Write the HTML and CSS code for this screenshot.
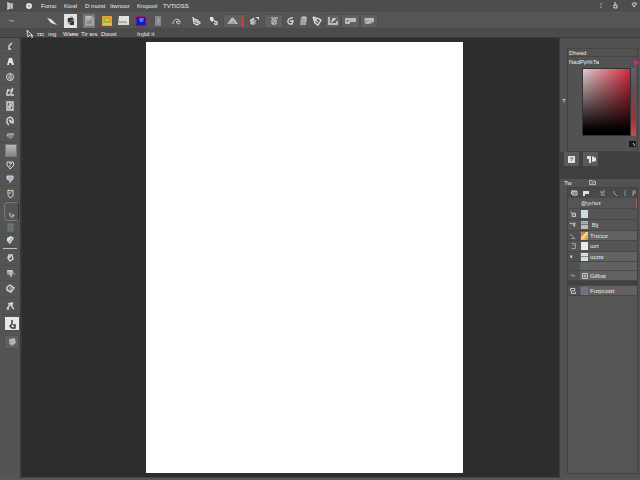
FILE: index.html
```html
<!DOCTYPE html>
<html lang="en">
<head>
<meta charset="utf-8">
<title>Paint</title>
<link rel="stylesheet" href="styles.css">
</head>
<body>
<div class="app">
  <header>
    <nav class="menu" aria-label="Menu">
      <svg class="ico" viewBox="0 0 12 12"><path class="soft" d="M3 3h6v6H3z"/><path d="M3 3h2v6H3M8 4v4"/></svg>
      <svg class="ico" viewBox="0 0 12 12"><circle class="fill" cx="6" cy="6" r="3"/><path class="shade" d="M5 5l2 2"/></svg>
      <button>Fomo</button><button>Kiosl</button><button>Dːmoist</button><button>Itwnuor</button><button>Kropoxl</button><button>TVTIOSS</button>
      <span class="window">
        <svg class="ico dim" viewBox="0 0 12 12"><path d="M5 4h2M5 7h2"/></svg>
        <svg class="ico" viewBox="0 0 12 12"><path d="M5 2v3H4v3h3V5H5"/></svg>
        <svg class="ico" viewBox="0 0 12 12"><path d="M4 3l2 4 3-4M5 3h3"/></svg>
      </span>
    </nav>
    <div class="toolbar">
      <button aria-label="Collapse"><svg class="ico dim" viewBox="0 0 12 12"><path d="M4 5l2 1h3"/></svg></button>
      <button aria-label="Undo"><svg class="ico" viewBox="0 0 12 12"><path class="fill" d="M1 3l4 1 6 6-6-2z"/></svg></button>
      <button class="light" aria-label="Brush"><svg class="ico" viewBox="0 0 12 12"><path class="fill" d="M0 0h12v12H0z"/><path class="soft" d="M2 4l5-3 3 4-3 5-4-1z"/><path class="ink thick" d="M8 4H4v2l4 1v2H5"/></svg></button>
      <button class="grey" aria-label="Document"><svg class="ico" viewBox="0 0 12 12"><path class="soft" d="M2 1h7l2 2v8H2z"/><path d="M3 2h5M4 5h3"/><path class="shade" d="M4 6h5M4 8h5"/></svg></button>
      <button aria-label="Picture"><svg class="ico" viewBox="0 0 12 12"><path fill="#ef9b32" stroke="none" d="M1 1h10v10H1z"/><path fill="#8dbb3a" stroke="none" d="M3 3h6v5H3z"/><path stroke="#ffe264" d="M2 9h8M4 5h4"/></svg></button>
      <button aria-label="Open"><svg class="ico" viewBox="0 0 12 12"><path class="fill" d="M1 1h10v9H0z"/><path stroke="#d8d1a0" d="M1 9h10"/><path class="shade" d="M1 7h8"/></svg></button>
      <button aria-label="Color"><svg class="ico" viewBox="0 0 12 12"><path fill="#1818b8" stroke="#892b74" d="M1 1h10v10H1z"/><path fill="#3c7cff" stroke="none" d="M4 3h5l-1 4H5z"/><path stroke="#e52020" d="M1 1h10"/></svg></button>
      <button aria-label="Page"><svg class="ico dim" viewBox="0 0 12 12"><path class="soft" d="M3 1h6v10H3z"/><path d="M5 4h2v3H5"/></svg></button>
      <button aria-label="Rotate"><svg class="ico" viewBox="0 0 12 12"><path d="M2 9c0-4 4-6 6-4s1 4-1 4l-2-2 3-1"/></svg></button>
      <button aria-label="Fill"><svg class="ico" viewBox="0 0 12 12"><path class="bold" d="M3 2l1 6 3 2 3-2-3-3-4-1M5 6l3 2"/></svg></button>
      <button aria-label="Link"><svg class="ico" viewBox="0 0 12 12"><path class="fill" d="M2 2h3l1 3-2 2-2-2z"/><path class="bold" d="M6 6l3 1v3M6 8l2 2"/></svg></button>
      <button class="raised marked" aria-label="Ruler"><svg class="ico" viewBox="0 0 12 12"><path class="soft" d="M1 9l4-6 2 1 4 5z"/><path d="M1 9l4-6 2 1 3 5M4 7l2-2"/></svg></button>
      <button aria-label="Snap"><svg class="ico" viewBox="0 0 12 12"><circle class="soft" cx="5" cy="7" r="3"/><path class="fill" d="M7 2h4v3L9 3z"/><path class="bold" d="M2 6l4-3M3 9l2-2"/></svg></button>
      <button class="raised" aria-label="Grid"><svg class="ico" viewBox="0 0 12 12"><path d="M3 3h5M4 5h4v4H4zM5 8l2-2M9 2v2"/></svg></button>
      <button aria-label="Curve"><svg class="ico" viewBox="0 0 12 12"><path class="bold" d="M9 3C4 2 2 8 6 9h2l1-3H6"/></svg></button>
      <button aria-label="Mirror"><svg class="ico" viewBox="0 0 12 12"><path class="soft" d="M4 2h5v8H3z"/><path d="M5 2h4v5"/></svg></button>
      <button aria-label="Shape"><svg class="ico" viewBox="0 0 12 12"><path class="bold" d="M2 2l2 6 3 2 3-5-4-2-2 2 3 2M2 2l3 1"/></svg></button>
      <button class="raised" aria-label="Crop"><svg class="ico" viewBox="0 0 12 12"><path class="bold" d="M2 2v7h8V6M4 7l4-3H5"/></svg></button>
      <button class="raised" aria-label="Align"><svg class="ico" viewBox="0 0 12 12"><path class="bold" d="M1 3v5h3V6h7M1 4h10"/></svg></button>
      <button class="raised" aria-label="Layer"><svg class="ico" viewBox="0 0 12 12"><path class="soft" d="M1 4l3-1h7v4L7 9H2z"/><path d="M2 4h8v2M4 8l4-2"/></svg></button>
    </div>
    <div class="options">
      <svg class="ico" viewBox="0 0 12 12"><path d="M3 2l1 7 2-2 3 1zM8 7v3"/></svg>
      <button>ɪɪc</button><button>ıııg</button><button>Waʀɐ</button><button>Tir ɐıs</button><button>Dɑost</button><button>Iɱlɑl it</button>
    </div>
  </header>
  <main>
    <aside class="tools" aria-label="Tools">
      <button aria-label="Pen"><svg class="ico" viewBox="0 0 12 12"><path class="bold" d="M8 3L5 6v3h2"/></svg></button>
      <button aria-label="Text"><svg class="ico" viewBox="0 0 12 12"><path class="fill" d="M3 9l2-7h3l2 7H8L7 7H5v2z"/></svg></button>
      <button aria-label="Stamp"><svg class="ico" viewBox="0 0 12 12"><circle cx="6" cy="6" r="3.5"/><path d="M5 4h2v5M5 5v3"/></svg></button>
      <button aria-label="Select"><svg class="ico" viewBox="0 0 12 12"><path class="bold" d="M3 4h2L3 6v3h3M9 2L7 5h2M7 6v3h3"/></svg></button>
      <button aria-label="Frame"><svg class="ico" viewBox="0 0 12 12"><path class="bold" d="M3 2h6v8H3zM5 4h2v2H5v2h2"/></svg></button>
      <button aria-label="Zoom"><svg class="ico" viewBox="0 0 12 12"><path class="bold" d="M3 4c4-4 7 0 6 4l-2-1M3 4v4l2 2M5 5l2 1-1 2"/></svg></button>
      <button aria-label="Lasso"><svg class="ico dim" viewBox="0 0 12 12"><path class="soft" d="M3 4h7v2L7 9 3 7z"/><path class="bold" d="M10 4H4L3 6"/></svg></button>
      <button class="swatch" aria-label="Gradient"></button>
      <button aria-label="Bucket"><svg class="ico" viewBox="0 0 12 12"><path d="M3 3h6l1 3-4 4-3-4zM5 4l2 1 1-1M6 6v2"/></svg></button>
      <button aria-label="Blur"><svg class="ico" viewBox="0 0 12 12"><path fill="#aaaace" d="M3 3h6v3L7 8 3 6zM6 7v3"/></svg></button>
      <button aria-label="Shape"><svg class="ico" viewBox="0 0 12 12"><path d="M4 2l3 1 2-1v6l-3 2-2-3zM6 4v2"/></svg></button>
      <button class="chosen" aria-label="Brush"><svg class="ico" viewBox="0 0 12 12"><path d="M4 5c-1 5 4 5 4 2H6"/></svg></button>
      <button aria-label="Pattern"><svg class="ico dim" viewBox="0 0 12 12"><path fill="#65757a" stroke="#809397" d="M4 3h5v7H4zM7 3v6"/></svg></button>
      <button aria-label="Eraser"><svg class="ico" viewBox="0 0 12 12"><path class="fill" d="M3 4l4-2 3 2-4 6-3-3z"/><path class="shade" d="M5 8l3-4"/></svg></button>
      <hr>
      <button aria-label="Dodge"><svg class="ico" viewBox="0 0 12 12"><path class="bold" d="M5 3h3l1 4-3 2-2-3zM6 4v2"/></svg></button>
      <button aria-label="Clone"><svg class="ico" viewBox="0 0 12 12"><path class="soft" d="M3 3h5l2 3-3 3-4-2z"/><path d="M3 4h6M7 3v7M10 7h1"/></svg></button>
      <button aria-label="Smudge"><svg class="ico" viewBox="0 0 12 12"><path class="bold" d="M3 4l3-2 4 3-3 4-4-2z"/><path fill="#a78078" stroke="none" d="M5 4h3v3H5z"/></svg></button>
      <button aria-label="Move"><svg class="ico" viewBox="0 0 12 12"><path class="bold" d="M3 9l2-3 4-3M4 4l4-1v4l2 2M3 9h2"/></svg></button>
      <button class="ground" aria-label="Foreground color"><svg class="ico" viewBox="0 0 12 12"><path class="ink bold" d="M6 2v4L4 8l2 2h3V7H7"/></svg></button>
      <button class="raised" aria-label="Mask"><svg class="ico" viewBox="0 0 12 12"><path class="soft" d="M3 3l6-1 1 5-4 3-3-2z"/><path d="M4 5l4-2M5 8l4-3"/></svg></button>
    </aside>
    <section class="canvas"><div class="page"></div></section>
    <aside class="side">
      <div class="grip">?</div>
      <section class="color">
        <h2>Dhesd</h2>
        <div class="picker">
          <h3>NadPp%Ta</h3>
          <div class="field"><div class="shades"></div><div class="hue"></div></div>
          <svg class="ico" viewBox="0 0 12 12"><path fill="#191919" stroke="none" d="M4 3h7v6H4z"/><path d="M8 5l2 3"/></svg>
          <span class="dot"></span>
        </div>
      </section>
      <div class="modes">
        <button aria-label="Swatches"><svg class="ico" viewBox="0 0 12 12"><path class="fill" d="M2 3h7v7H2z"/><path class="shade" d="M4 5h3l-2 3"/></svg></button>
        <button aria-label="History"><svg class="ico" viewBox="0 0 12 12"><path class="fill" d="M2 3h4v7H4V6H2zM7 3l4 2v3L7 9z"/></svg></button>
      </div>
      <div class="tabs"><button>Tw</button><button aria-label="Folders"><svg class="ico" viewBox="0 0 12 12"><path d="M2 3h3l1 1h3v4H2zM4 6h3"/></svg></button></div>
      <section class="layers">
        <div class="actions">
          <button aria-label="Visible"><svg class="ico" viewBox="0 0 12 12"><path d="M3 4h6v4H5L3 6l2-2v4M7 4v3"/></svg></button>
          <button aria-label="Folder"><svg class="ico" viewBox="0 0 12 12"><path class="fill" d="M3 4h6v3H5v2H3z"/></svg></button>
          <button aria-label="Edit"><svg class="ico dim" viewBox="0 0 12 12"><path d="M4 5h3L5 8h4M8 3v3"/></svg></button>
          <button aria-label="Back"><svg class="ico dim" viewBox="0 0 12 12"><path d="M4 4v2l3 3"/></svg></button>
          <button aria-label="Down"><svg class="ico" viewBox="0 0 12 12"><path stroke="#6ba0a3" d="M6 3v6"/></svg></button>
          <button aria-label="Corner"><svg class="ico dim" viewBox="0 0 12 12"><path d="M8 4H5v5M5 6h3"/></svg></button>
        </div>
        <ul>
          <li class="head"><span></span><b>@yı/ıoɪ</b></li>
          <li><svg class="ico" viewBox="0 0 12 12"><path d="M3 3l2 2v4h4V5H5M6 7h2"/></svg><i class="thumb sky"></i><b></b></li>
          <li><svg class="ico" viewBox="0 0 12 12"><path d="M2 4h3l3 4V4M6 4h3"/></svg><i class="thumb lines"></i><b>&nbsp;Bij</b></li>
          <li class="on"><svg class="ico dim" viewBox="0 0 12 12"><path d="M3 4l5 5H4M4 4v2"/></svg><i class="thumb sun"></i><b>Tnxɔɔr</b></li>
          <li><svg class="ico dim" viewBox="0 0 12 12"><path d="M4 3h5v6H4M6 5h2"/></svg><i class="thumb"></i><b>ɯrt</b></li>
          <li class="on"><svg class="ico" viewBox="0 0 12 12"><path class="fill" d="M3 4h2v3H3z"/></svg><i class="thumb lines pale"></i><b>ɯɔɪɐ</b></li>
          <li class="on short"><span></span><i class="thumb teal"></i><b></b></li>
          <li class="on"><svg class="ico dim" viewBox="0 0 12 12"><path d="M3 5h4l2 2M6 5v2"/></svg><svg class="ico" viewBox="0 0 12 12"><path d="M3 3h6v6H3zM5 5h2v2H5z"/></svg><b>Gilfıɑt</b></li>
          <li class="gap"></li>
          <li class="on"><svg class="ico" viewBox="0 0 12 12"><path d="M3 3h5v3H4v3h5V7M3 3v3"/></svg><i class="thumb slate"></i><b>Fʊɪpıɔɑɪt</b></li>
        </ul>
      </section>
    </aside>
  </main>
</div>
</body>
</html>
```
FILE: styles.css
```css
* { box-sizing: border-box; }
body {
  margin: 0;
  background: #535353;
  color: #ececec;
  font: 6px/10px "Liberation Sans", "DejaVu Sans", sans-serif;
}
button {
  display: flex;
  align-items: center;
  justify-content: center;
  margin: 0;
  padding: 0;
  border: 0;
  background: none;
  color: inherit;
  font: inherit;
  white-space: nowrap;
}
.app {
  display: flex;
  flex-direction: column;
  min-height: 100vh;
  border-bottom: 2px solid #595657;
}

/* icons */
.ico {
  width: 12px;
  height: 12px;
  flex: none;
  fill: none;
  stroke: #d8d8d8;
  stroke-width: 1;
}
.dim { opacity: .65; }
.fill { fill: #e2e2e0; stroke: none; }
.soft { fill: #a2a2a2; stroke: none; }
.ink { stroke: #343434; }
.shade { stroke: #777; }
.thick { stroke-width: 2; }
.bold { stroke-width: 1.4; }

/* menu and bars */
.menu {
  display: grid;
  grid-template-columns: 19px 18px 23px 21px 25px 27px 26px 27px 1fr;
  align-items: center;
  justify-items: start;
  height: 12px;
  padding-left: 4px;
  background: #4d4d4d;
}
.window {
  display: flex;
  gap: 3px;
  justify-self: end;
}
.window :last-child { margin-left: 3px; }
.toolbar {
  display: grid;
  grid-template-columns: 43px 18px 19px 18px 17px 18px 16px 18px 19px 19px 18px 21px 20px 19px 14px 12px 16px 16px 19px 18px;
  align-items: center;
  height: 16px;
  border-top: 1px solid #585858;
  background: #555;
}
.toolbar button { height: 14px; }
.toolbar button:first-child { justify-content: start; padding-left: 5px; }
.toolbar .light, .toolbar .grey { margin: 0 3px; background: #e2e2e0; }
.toolbar .grey { background: #777; }
.raised { background: #606060; border: 1px solid #4f4f4f; }
.toolbar .marked { border-right: 2px solid #bd4631; }
.options {
  display: grid;
  grid-template-columns: 13px 11px 15px 18px 20px 36px 1fr;
  align-items: center;
  justify-items: start;
  height: 10px;
  padding-left: 24px;
  background: #4b4b4b;
  border-bottom: 1px solid #3b3b3b;
}

/* workspace */
main {
  display: grid;
  grid-template-columns: 22px 1fr 81px;
  flex: 1;
}
.tools {
  display: grid;
  grid-template-rows: 16px 16px 15px 14px 15px 15px 14px 15px 15px 13px 16px 19px 13px 13px 3px 16px 15px 17px 17px 18px 18px;
  align-content: start;
  background: #545454;
  border-right: 2px solid #383838;
}
.tools button { border-bottom: 1px solid #4c4c4c; }
.tools hr {
  width: 14px;
  height: 1px;
  margin: 1px auto;
  border: 0;
  background: #bbb;
}
.tools .swatch {
  margin: 1px 3px 1px 5px;
  border: 1px solid #777;
  background: linear-gradient(#b9b9b9, #858585);
}
.tools .chosen {
  margin: 0 1px 0 4px;
  align-items: end;
  border: 1px solid #777;
  border-right-color: #303030;
  border-radius: 4px;
  background: #555;
}
.tools .ground { margin: 2px 1px 2px 5px; background: #e8e8e8; }
.tools .raised { margin: 2px 1px 2px 4px; }
.canvas {
  display: flex;
  padding: 4px 96px 4px 124px;
  background: #2d2d2d;
  border-bottom: 1px solid #444;
}
.page { flex: 1; background: #fff; }

/* right side */
.side {
  position: relative;
  display: flex;
  flex-direction: column;
  padding: 10px 2px 4px 7px;
  background: #525252;
  border-left: 1px solid #3d3d3d;
}
.grip {
  position: absolute;
  left: 2px;
  top: 58px;
}
h2, h3 { margin: 0; font: inherit; padding-left: 1px; }
.color { border: 1px solid #414141; border-top-color: #484848; height: 104px; }
.color h2 { height: 8px; line-height: 8px; border-bottom: 1px solid #444; }
.picker { position: relative; }
.field {
  display: grid;
  grid-template-columns: 1fr 5px;
  height: 68px;
  margin: 1px 1px 0 14px;
}
.shades {
  border: 1px solid #333;
  background: linear-gradient(transparent, #000 92%), linear-gradient(90deg, #e1cccf, #d52a3c);
}
.hue { background: linear-gradient(#59676b, #5a5055 30%, #a0303a 75%, #d04b4b); }
.picker .ico { display: block; margin: 2px 0 0 auto; }
.dot {
  position: absolute;
  right: -1px;
  top: 3px;
  width: 4px;
  height: 5px;
  border-radius: 2px;
  background: #d9238b;
}
.modes {
  display: flex;
  gap: 4px;
  height: 27px;
  margin: 0 -2px 0 -7px;
  padding-left: 4px;
  background: #404040;
}
.modes button { width: 15px; height: 14px; background: #5a5a5a; }
.tabs {
  display: grid;
  grid-template-columns: 23px 1fr;
  justify-items: start;
  height: 8px;
  margin-left: -3px;
  line-height: 8px;
}
.tabs button { height: 8px; }
.tabs .ico { height: 10px; }
.layers {
  flex: 1;
  background: #555;
  border: 1px solid #424242;
}
.actions {
  display: grid;
  grid-template-columns: 12px 12px 20px 8px 10px 8px;
  height: 10px;
  background: #494949;
}
.actions button { overflow: hidden; }
ul { margin: 0; padding: 0; list-style: none; }
li {
  display: grid;
  grid-template-columns: 12px 9px 1fr;
  align-items: center;
  height: 11px;
  border-bottom: 1px solid #484848;
}
li b {
  padding-left: 1px;
  font-weight: 400;
  white-space: nowrap;
}
li .ico { width: 10px; height: 10px; }
.head { grid-template-columns: 12px 1fr; border-right: 1px solid #a05a56; }
.on { height: 10px; background: linear-gradient(90deg, #505050 12px, #626262 12px); }
.short { height: 9px; }
.gap { height: 5px; background: #414141; }
.thumb { width: 7px; height: 8px; margin-left: 1px; background: #e8e8e8; }
.sky { background: #c5dde2; }
.lines { background: linear-gradient(#aaa 3px, #737984 3px, #737984 4px, #bbb 4px); }
.pale { background: linear-gradient(#ddd 3px, #888 3px, #888 4px, #ddd 4px); }
.sun { background: linear-gradient(135deg, #e6872d 40%, #f5df9a 40%, #d98630); }
.teal { background: #596a69; }
.slate { background: #71747d; }
```
